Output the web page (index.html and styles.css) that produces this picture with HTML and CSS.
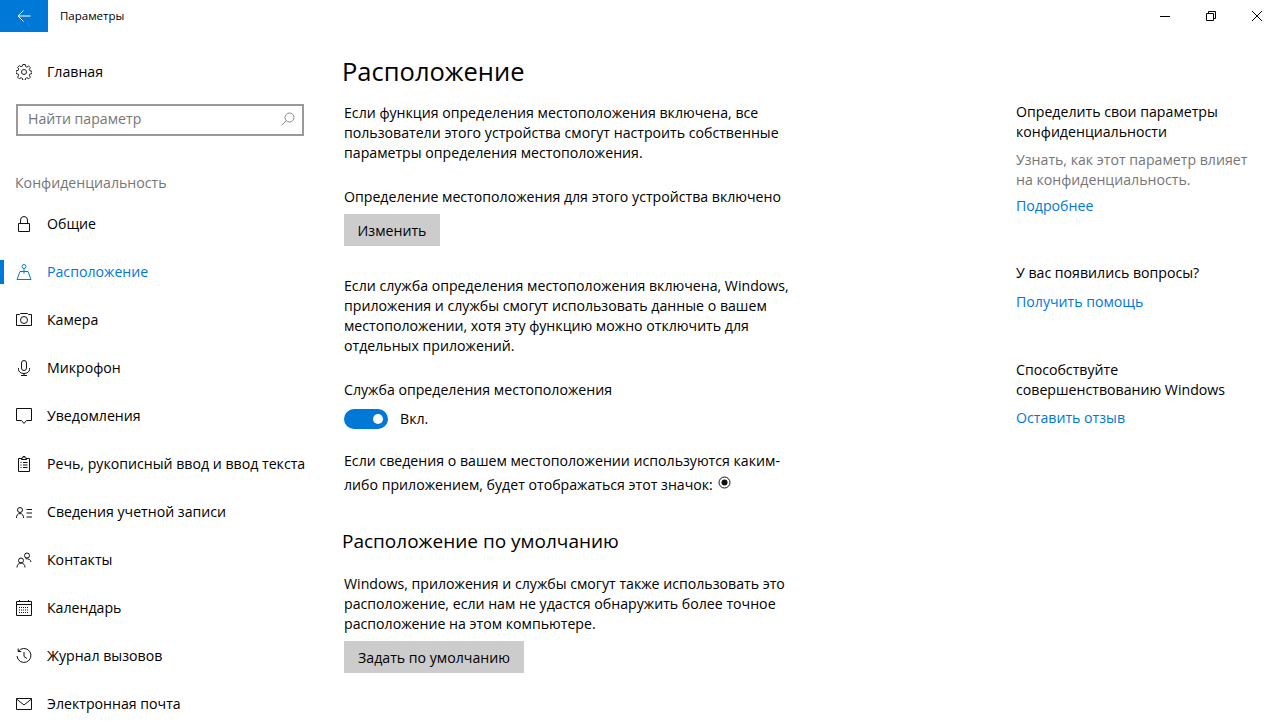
FILE: index.html
```html
<!DOCTYPE html>
<html lang="ru">
<head>
<meta charset="utf-8">
<title>Параметры</title>
<link rel="stylesheet" href="styles.css">
</head>
<body>
<div class="window">
  <header class="titlebar">
    <div class="back"><svg width="16" height="16" viewBox="0 0 16 16"><path d="M14.500 8H2M7.500 2.500L2 8l5.500 5.500" fill="none" stroke="#fff" stroke-width="1"/></svg></div>
    <div class="apptitle">Параметры</div>
    <div class="winbtns">
      <div class="winbtn"><svg width="10" height="10" viewBox="0 0 10 10"><path d="M0 5.500H10" stroke="#000" fill="none"/></svg></div>
      <div class="winbtn"><svg width="10" height="10" viewBox="0 0 10 10"><path d="M.5 2.500h7v7h-7zM2.500 2.500V.5h7v7h-2" stroke="#000" fill="none"/></svg></div>
      <div class="winbtn"><svg width="10" height="10" viewBox="0 0 10 10"><path d="M0 0L10 10M10 0L0 10" stroke="#000" fill="none"/></svg></div>
    </div>
  </header>
  <div class="content">
    <aside class="sidebar">
      <div class="navrow home">
        <svg class="ico" width="16" height="16" viewBox="0 0 16 16"><g fill="none" stroke="#222"><circle cx="8" cy="8" r="2.500"/><path d="M6.800.5h2.400l.4 2 1.300.6 1.800-1.100 1.700 1.700-1.100 1.800.6 1.300 2 .4v2.400l-2 .4-.6 1.300 1.100 1.800-1.700 1.700-1.800-1.100-1.300.6-.4 2H6.800l-.4-2-1.300-.6-1.800 1.100-1.700-1.700 1.100-1.800-.6-1.300-2-.4V6.800l2-.4.6-1.300L1.600 3.300l1.700-1.700 1.800 1.100 1.300-.6z"/></g></svg>
        <span>Главная</span>
      </div>
      <div class="search">
        <span>Найти параметр</span>
        <svg width="14" height="14" viewBox="0 0 14 14"><g fill="none" stroke="#888"><circle cx="8.500" cy="5.500" r="4.500"/><path d="M5.300 8.700L.5 13.500"/></g></svg>
      </div>
      <div class="section">Конфиденциальность</div>
      <nav>
        <div class="navrow"><svg class="ico" width="16" height="16" viewBox="0 0 16 16"><path d="M2.500 7.500h11v8h-11zM4.500 7.500V4a3.500 3.500 0 0 1 7 0v3.500" fill="none" stroke="#111"/></svg><span>Общие</span></div>
        <div class="navrow active"><svg class="ico" width="16" height="16" viewBox="0 0 16 16"><g fill="none" stroke="#0078d7"><circle cx="8" cy="2.500" r="2"/><path d="M8 4.500v5M4 7.500h8l3 8H1z"/></g></svg><span>Расположение</span></div>
        <div class="navrow"><svg class="ico" width="16" height="16" viewBox="0 0 16 16"><g fill="none" stroke="#111"><path d="M.5 2.500h3l1-1h7l1 1h3v11H.5z"/><circle cx="8" cy="8" r="3.500"/></g></svg><span>Камера</span></div>
        <div class="navrow"><svg class="ico" width="16" height="16" viewBox="0 0 16 16"><g fill="none" stroke="#111"><rect x="5.500" y=".5" width="5" height="10" rx="2.500"/><path d="M2.500 8v1.500a5.500 4 0 0 0 11 0V8M8 13.500v2M5 15.500h6"/></g></svg><span>Микрофон</span></div>
        <div class="navrow"><svg class="ico" width="16" height="16" viewBox="0 0 16 16"><path d="M.5 .5h15v12h-5L8 15.500l-2.500-3h-5z" fill="none" stroke="#111"/></svg><span>Уведомления</span></div>
        <div class="navrow"><svg class="ico" width="16" height="16" viewBox="0 0 16 16"><g fill="none" stroke="#111"><path d="M5.500 2.500h-3v13h11v-13h-3M5.500 3.500V2h1.500V.5h2V2h1.500v1.500z"/><path d="M4.500 6.500h1M7 6.500h4.500M4.500 9h1M7 9h4.500M4.500 11.500h1M7 11.500h4.500"/></g></svg><span>Речь, рукописный ввод и ввод текста</span></div>
        <div class="navrow"><svg class="ico" width="16" height="16" viewBox="0 0 16 16"><g fill="none" stroke="#111"><circle cx="4" cy="6" r="2.500"/><path d="M.5 14c0-2.500 1-4.500 3.500-4.500S7.500 11.500 7.500 14M10.500 5.500H16M10.500 9H16M10.500 13H16"/></g></svg><span>Сведения учетной записи</span></div>
        <div class="navrow"><svg class="ico" width="16" height="16" viewBox="0 0 16 16"><g fill="none" stroke="#111"><circle cx="5" cy="8.500" r="2.500"/><path d="M1 15.500c0-2.500 1.500-4.500 4-4.500s4 2 4 4.500"/><circle cx="11" cy="3.500" r="2.500"/><path d="M9.500 6.700c2.800-.2 5.300 1 5.500 3.300"/></g></svg><span>Контакты</span></div>
        <div class="navrow"><svg class="ico" width="16" height="16" viewBox="0 0 16 16"><g fill="none" stroke="#111"><path d="M.5 1.500h15v14H.5zM.5 4.500h15M3.500 0v2M12.500 0v2"/><path d="M3 7.500h10M3 10h10M3 12.500h10" stroke-dasharray="1 1"/></g></svg><span>Календарь</span></div>
        <div class="navrow"><svg class="ico" width="16" height="16" viewBox="0 0 16 16"><g fill="none" stroke="#111"><path d="M2.200 3.500A7 7 0 1 1 1 8M2.200 .5v3h3M8 4v4.500l3 2"/></g></svg><span>Журнал вызовов</span></div>
        <div class="navrow"><svg class="ico" width="16" height="16" viewBox="0 0 16 16"><path d="M.5 2.500h15v11H.5zM.5 3l7.500 6 7.500-6" fill="none" stroke="#111"/></svg><span>Электронная почта</span></div>
      </nav>
    </aside>
    <main class="main">
      <h1>Расположение</h1>
      <p class="p1">Если функция определения местоположения включена, все пользователи этого устройства смогут настроить собственные параметры определения местоположения.</p>
      <p class="p2">Определение местоположения для этого устройства включено</p>
      <div class="btn">Изменить</div>
      <p class="p3">Если служба определения местоположения включена, Windows, приложения и службы смогут использовать данные о вашем местоположении, хотя эту функцию можно отключить для отдельных приложений.</p>
      <p class="p4">Служба определения местоположения</p>
      <div class="toggle"><div class="track"><div class="knob"></div></div><span>Вкл.</span></div>
      <p class="p5">Если сведения о вашем местоположении используются каким-<br>либо приложением, будет отображаться этот значок:<svg class="dot" width="13" height="13" viewBox="0 0 13 13"><circle cx="6.500" cy="6.500" r="5.500" fill="none" stroke="#111"/><circle cx="6.500" cy="6.500" r="3" fill="#111"/></svg></p>
      <h2>Расположение по умолчанию</h2>
      <p class="p6">Windows, приложения и службы смогут также использовать это расположение, если нам не удастся обнаружить более точное расположение на этом компьютере.</p>
      <div class="btn btn2">Задать по умолчанию</div>
    </main>
    <aside class="right">
      <p>Определить свои параметры конфиденциальности</p>
      <p class="gray">Узнать, как этот параметр влияет на конфиденциальность.</p>
      <a class="link">Подробнее</a>
      <p class="gap1">У вас появились вопросы?</p>
      <a class="link l2">Получить помощь</a>
      <p class="gap2">Способствуйте совершенствованию Windows</p>
      <a class="link l2b">Оставить отзыв</a>
    </aside>
  </div>
</div>
</body>
</html>
```
FILE: styles.css
```css
* { box-sizing: border-box; }
html, body { margin: 0; height: 725px; overflow: hidden; background: #fff; }
body { font-family: "Open Sans", "Noto Sans", sans-serif; font-size: 14.150px; line-height: 20px; color: #000; }
p { margin: 0; }
.window { height: 725px; overflow: hidden; display: flex; flex-direction: column; }
.titlebar { height: 32px; display: flex; align-items: center; flex: none; }
.back { width: 48px; height: 32px; background: #0078d7; display: flex; align-items: center; justify-content: center; }
.apptitle { margin-left: 12px; font-size: 11.500px; }
.winbtns { margin-left: auto; display: flex; }
.winbtn { width: 46px; height: 32px; display: flex; align-items: center; justify-content: center; }
.content { display: flex; flex: 1; min-height: 0; }
.sidebar { width: 344px; flex: none; }
.navrow { height: 48px; display: flex; align-items: center; padding-left: 16px; position: relative; }
.navrow span { margin-left: 15px; }
.ico { flex: none; }
.home { margin-top: 16px; }
.search { margin: 8px 0 0 16px; width: 288px; height: 32px; border: 2px solid #999; display: flex; align-items: center; justify-content: space-between; padding: 0 7px 2px 10px; color: #767676; }
.section { margin: 37px 0 0 15px; color: #767676; height: 27px; }
.active { color: #0078d7; }
.active::before { content: ""; position: absolute; left: 0; top: 12px; width: 4px; height: 24px; background: #0078d7; }
.main { width: 460px; flex: none; }
h1 { margin: 21px 0 0 -2px; font-size: 25.500px; font-weight: 400; line-height: 36px; }
.p1 { margin-top: 14px; }
.p2 { margin-top: 24px; }
.btn { margin-top: 7px; width: 96px; height: 32px; padding-top: 2px; background: #ccc; display: flex; align-items: center; justify-content: center; }
.btn2 { width: 180px; margin-top: 7px; }
.p3 { margin-top: 30px; }
.p4 { margin-top: 24px; }
.toggle { margin-top: 9px; display: flex; align-items: center; gap: 12px; height: 20px; }
.track { width: 44px; height: 20px; border-radius: 10px; background: #0078d7; position: relative; }
.knob { position: absolute; right: 5px; top: 5px; width: 10px; height: 10px; border-radius: 50%; background: #fff; }
.p5 { margin-top: 20px; line-height: 24px; }
.dot { margin-left: 5px; vertical-align: 1px; }
h2 { margin: 30px 0 0 -2px; font-size: 19px; font-weight: 400; line-height: 28px; }
.p6 { margin-top: 19px; }
.right { margin-left: 212px; width: 232px; padding-top: 70px; }
.gray { color: #767676; margin-top: 8px; }
.link { display: block; color: #0078d7; margin-top: 6px; }
.gap1 { margin-top: 47px; }
.l2 { margin-top: 9px; }
.gap2 { margin-top: 48px; }
.l2b { margin-top: 8px; }
```
